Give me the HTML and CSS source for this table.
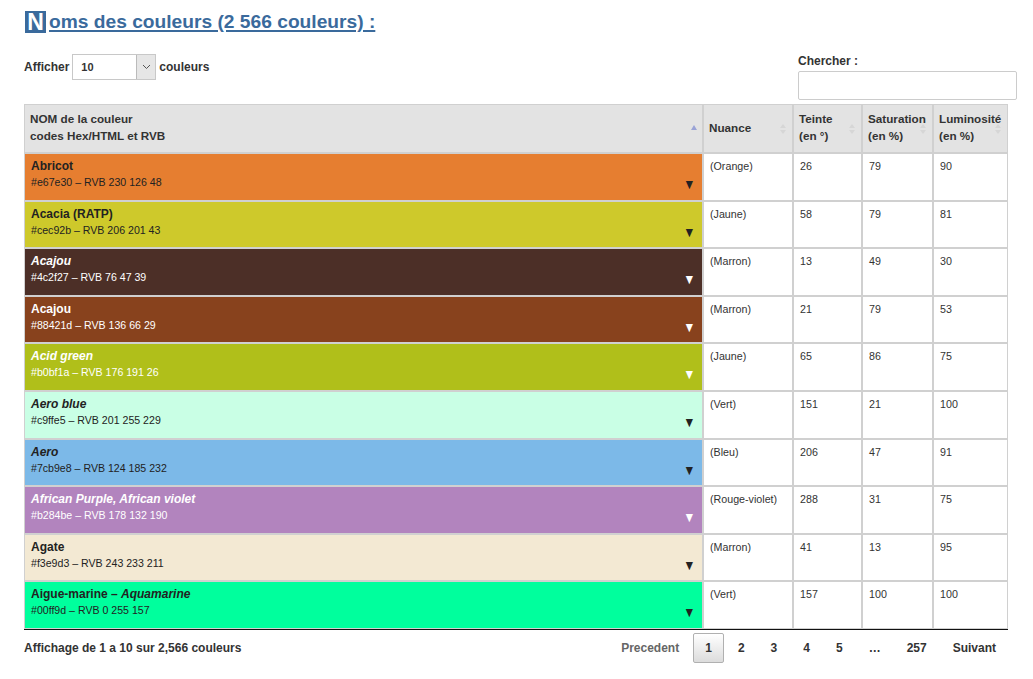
FILE: index.html
```html
<!DOCTYPE html>
<html lang="fr">
<head>
<meta charset="utf-8">
<title>Noms des couleurs</title>
<link rel="stylesheet" href="styles.css">
</head>
<body>
<div class="page">
  <h2 class="title"><span class="initial">N</span><a href="#" class="title-link">oms des couleurs (2 566 couleurs) :</a></h2>

  <div class="controls">
    <label class="length">Afficher
      <span class="select"><span class="select-value">10</span><span class="select-btn"><svg width="9" height="6" viewBox="0 0 9 6"><path d="M1 1 L4.5 4.5 L8 1" fill="none" stroke="#555" stroke-width="1"/></svg></span></span>
      couleurs</label>
    <div class="search">
      <label class="search-label">Chercher :</label>
      <input class="search-input" type="text">
    </div>
  </div>

  <table class="colors">
    <colgroup>
      <col class="c1"><col class="c2"><col class="c3"><col class="c4"><col class="c5">
    </colgroup>
    <thead>
      <tr>
        <th class="sorted">NOM de la couleur<br>codes Hex/HTML et RVB<svg class="sort-icon" width="6" height="5" viewBox="0 0 6 5"><path d="M3 0 L6 5 L0 5Z" fill="#9aa3d6"/></svg></th>
        <th>Nuance<svg class="sort-icon" width="6" height="10" viewBox="0 0 6 10"><path d="M3 0 L6 4 L0 4Z M3 10 L6 6 L0 6Z" fill="#d6d6d6"/></svg></th>
        <th>Teinte<br>(en °)<svg class="sort-icon" width="6" height="10" viewBox="0 0 6 10"><path d="M3 0 L6 4 L0 4Z M3 10 L6 6 L0 6Z" fill="#d6d6d6"/></svg></th>
        <th>Saturation<br>(en %)<svg class="sort-icon" width="6" height="10" viewBox="0 0 6 10"><path d="M3 0 L6 4 L0 4Z M3 10 L6 6 L0 6Z" fill="#d6d6d6"/></svg></th>
        <th>Luminosité<br>(en %)<svg class="sort-icon" width="6" height="10" viewBox="0 0 6 10"><path d="M3 0 L6 4 L0 4Z M3 10 L6 6 L0 6Z" fill="#d6d6d6"/></svg></th>
      </tr>
    </thead>
    <tbody>
      <tr>
        <td class="name dark-text" style="background:#e67e30"><div class="name-box"><div><div class="nm">Abricot</div><div class="code">#e67e30 – RVB 230 126 48</div></div><span class="arrow">▼</span></div></td>
        <td>(Orange)</td><td>26</td><td>79</td><td>90</td>
      </tr>
      <tr>
        <td class="name dark-text" style="background:#cec92b"><div class="name-box"><div><div class="nm">Acacia (RATP)</div><div class="code">#cec92b – RVB 206 201 43</div></div><span class="arrow">▼</span></div></td>
        <td>(Jaune)</td><td>58</td><td>79</td><td>81</td>
      </tr>
      <tr>
        <td class="name light-text" style="background:#4c2f27"><div class="name-box"><div><div class="nm"><em>Acajou</em></div><div class="code">#4c2f27 – RVB 76 47 39</div></div><span class="arrow">▼</span></div></td>
        <td>(Marron)</td><td>13</td><td>49</td><td>30</td>
      </tr>
      <tr>
        <td class="name light-text" style="background:#88421d"><div class="name-box"><div><div class="nm">Acajou</div><div class="code">#88421d – RVB 136 66 29</div></div><span class="arrow">▼</span></div></td>
        <td>(Marron)</td><td>21</td><td>79</td><td>53</td>
      </tr>
      <tr>
        <td class="name light-text" style="background:#b0bf1a"><div class="name-box"><div><div class="nm"><em>Acid green</em></div><div class="code">#b0bf1a – RVB 176 191 26</div></div><span class="arrow">▼</span></div></td>
        <td>(Jaune)</td><td>65</td><td>86</td><td>75</td>
      </tr>
      <tr>
        <td class="name dark-text" style="background:#c9ffe5"><div class="name-box"><div><div class="nm"><em>Aero blue</em></div><div class="code">#c9ffe5 – RVB 201 255 229</div></div><span class="arrow">▼</span></div></td>
        <td>(Vert)</td><td>151</td><td>21</td><td>100</td>
      </tr>
      <tr>
        <td class="name dark-text" style="background:#7cb9e8"><div class="name-box"><div><div class="nm"><em>Aero</em></div><div class="code">#7cb9e8 – RVB 124 185 232</div></div><span class="arrow">▼</span></div></td>
        <td>(Bleu)</td><td>206</td><td>47</td><td>91</td>
      </tr>
      <tr>
        <td class="name light-text" style="background:#b284be"><div class="name-box"><div><div class="nm"><em>African Purple, African violet</em></div><div class="code">#b284be – RVB 178 132 190</div></div><span class="arrow">▼</span></div></td>
        <td>(Rouge-violet)</td><td>288</td><td>31</td><td>75</td>
      </tr>
      <tr>
        <td class="name dark-text" style="background:#f3e9d3"><div class="name-box"><div><div class="nm">Agate</div><div class="code">#f3e9d3 – RVB 243 233 211</div></div><span class="arrow">▼</span></div></td>
        <td>(Marron)</td><td>41</td><td>13</td><td>95</td>
      </tr>
      <tr>
        <td class="name dark-text" style="background:#00ff9d"><div class="name-box"><div><div class="nm">Aigue-marine – <em>Aquamarine</em></div><div class="code">#00ff9d – RVB 0 255 157</div></div><span class="arrow">▼</span></div></td>
        <td>(Vert)</td><td>157</td><td>100</td><td>100</td>
      </tr>
    </tbody>
  </table>

  <div class="footer">
    <div class="info">Affichage de 1 a 10 sur 2,566 couleurs</div>
    <div class="paging">
      <a class="pbtn disabled">Precedent</a>
      <a class="pbtn current">1</a>
      <a class="pbtn">2</a>
      <a class="pbtn">3</a>
      <a class="pbtn">4</a>
      <a class="pbtn">5</a>
      <span class="ellipsis">…</span>
      <a class="pbtn">257</a>
      <a class="pbtn">Suivant</a>
    </div>
  </div>
</div>
</body>
</html>
```

FILE: styles.css
```css
html, body {
  margin: 0;
  padding: 0;
  background: #fff;
}
body {
  font-family: "Liberation Sans", Arial, sans-serif;
  color: #333;
}
.page {
  padding: 10px 16px 0 24px;
  width: 993px;
}
.title {
  margin: 0;
  font-size: 19.2px;
  font-weight: bold;
  line-height: 24px;
  display: flex;
  align-items: flex-start;
  height: 24px;
}
.initial {
  display: inline-block;
  background: #3a6a9c;
  color: #fff;
  width: 21px;
  height: 22px;
  line-height: 23px;
  text-align: center;
  font-size: 23px;
  margin: 1px 3px 0 1px;
}
.title-link {
  color: #3a6a9c;
  text-decoration: underline;
  text-decoration-thickness: 2px;
  text-underline-offset: 2px;
}
.controls {
  display: flex;
  justify-content: space-between;
  align-items: flex-start;
  margin-top: 20px;
  height: 50px;
}
.length {
  font-size: 12px;
  font-weight: bold;
  display: flex;
  align-items: center;
  gap: 3px;
  height: 26px;
}
.select {
  display: inline-flex;
  width: 84px;
  height: 26px;
  box-sizing: border-box;
  border: 1px solid #c8c8c8;
  background: #fff;
}
.select-value {
  flex: 1;
  font-size: 11px;
  font-weight: bold;
  padding-left: 8px;
  line-height: 24px;
}
.select-btn {
  width: 18px;
  background: #e6e6e6;
  border-left: 1px solid #bbb;
  display: flex;
  align-items: center;
  justify-content: center;
}
.search {
  display: flex;
  flex-direction: column;
  width: 219px;
}
.search-label {
  font-size: 12px;
  font-weight: bold;
  line-height: 14px;
  margin-top: 0;
  height: 17px;
}
.search-input {
  box-sizing: border-box;
  width: 219px;
  height: 29px;
  border: 1px solid #ccc;
  border-radius: 2px;
  margin: 0;
}
.colors {
  width: 984px;
  border-collapse: separate;
  border-spacing: 0;
  table-layout: fixed;
  border-bottom: 1px solid #111;
}
.c1 { width: 679px; }
.c2 { width: 90px; }
.c3 { width: 69px; }
.c4 { width: 71px; }
.c5 { width: 75px; }
.colors th {
  background: #e3e3e3;
  border: 1px solid #d0d0d0;
  height: 49px;
  box-sizing: border-box;
  text-align: left;
  vertical-align: middle;
  font-size: 11.7px;
  font-weight: bold;
  line-height: 17px;
  padding: 0 14px 3px 5px;
  position: relative;
  color: #333;
}
.sort-icon {
  position: absolute;
  right: 6px;
  top: 50%;
  transform: translateY(-50%);
}
.colors th.sorted .sort-icon {
  right: 5px;
  transform: translateY(-4px);
}
.colors td {
  border: 1px solid #d0d0d0;
  height: 47.6px;
  box-sizing: border-box;
  vertical-align: top;
  font-size: 10.7px;
  line-height: 14px;
  padding: 5px 6px 0 6px;
  color: #333;
}
.colors td.name {
  padding: 2px 9px 0 6px;
}
.name-box {
  display: flex;
  justify-content: space-between;
  align-items: flex-end;
  height: 34px;
}
.nm {
  font-size: 12px;
  font-weight: bold;
  line-height: 15px;
}
.nm em {
  font-style: italic;
}
.code {
  font-size: 10.6px;
  line-height: 16px;
}
.arrow {
  font-size: 11px;
  line-height: 11px;
  font-family: "DejaVu Sans", sans-serif;
  transform: scaleX(0.85);
}
.dark-text, .dark-text .nm, .dark-text .code, .dark-text .arrow {
  color: #222;
}
.light-text, .light-text .nm, .light-text .code, .light-text .arrow {
  color: #fff;
}
.footer {
  display: flex;
  justify-content: space-between;
  align-items: center;
  width: 984px;
  padding-top: 3px;
}
.info {
  font-size: 12px;
  font-weight: bold;
  color: #333;
}
.paging {
  display: flex;
  align-items: center;
  font-size: 12px;
  font-weight: bold;
}
.pbtn {
  display: inline-block;
  padding: 6px 11px;
  line-height: 16px;
  border: 1px solid transparent;
  border-radius: 2px;
  margin-left: 2px;
  color: #333;
  text-align: center;
}
.pbtn.disabled {
  color: #666;
}
.pbtn.current {
  border-color: #b0b0b0;
  background: linear-gradient(#ffffff, #dcdcdc);
}
.ellipsis {
  padding: 0 12px;
  margin-left: 2px;
  color: #333;
}
```
